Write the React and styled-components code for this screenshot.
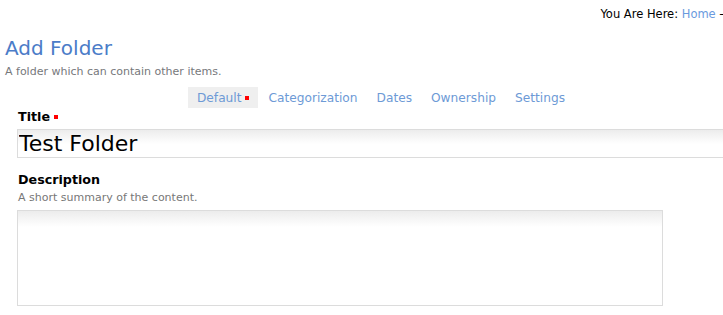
import React from 'react'
import styled, { createGlobalStyle } from 'styled-components'

const GlobalStyle = createGlobalStyle`
  html, body {
    margin: 0;
    padding: 0;
    overflow: hidden;
    background: #fff;
  }
  body {
    font-family: "DejaVu Sans", "Liberation Sans", sans-serif;
    color: #000;
  }
`

const tabs = [
  { label: 'Default', selected: true, required: true },
  { label: 'Categorization' },
  { label: 'Dates' },
  { label: 'Ownership' },
  { label: 'Settings' },
]

const App = () => {
  return (
    <Page>
      <GlobalStyle />
      <Breadcrumbs>
        You Are Here: <Crumb href="#">Home</Crumb> →
      </Breadcrumbs>
      <Heading>Add Folder</Heading>
      <Lead>A folder which can contain other items.</Lead>
      <TabBar>
        {tabs.map(tab => (
          <Tab key={tab.label} selected={tab.selected}>
            {tab.label}
            {tab.required && <Required />}
          </Tab>
        ))}
      </TabBar>
      <Field>
        <Label>Title<Required /></Label>
        <TextInput defaultValue="Test Folder" />
      </Field>
      <Field spaced>
        <Label>Description</Label>
        <Help>A short summary of the content.</Help>
        <TextArea />
      </Field>
    </Page>
  )
}

export default App

const Page = styled.div`
  width: 762px;
  display: flex;
  flex-direction: column;
`

const Breadcrumbs = styled.div`
  padding: 7px 33px 0 0;
  font-size: 11.5px;
  line-height: 14px;
  text-align: right;
  color: #000;
  white-space: nowrap;
`

const Crumb = styled.a`
  color: #6a9ade;
  text-decoration: none;
`

const Heading = styled.h1`
  margin: 15px 0 0;
  padding-left: 5px;
  font-size: 20px;
  line-height: 24px;
  font-weight: normal;
  color: #4b7cc8;
`

const Lead = styled.p`
  margin: 5px 0 0;
  padding-left: 5px;
  font-size: 11px;
  line-height: 14px;
  color: #76787b;
`

const TabBar = styled.nav`
  margin-top: 8px;
  display: flex;
  justify-content: center;
  gap: 1px;
`

const Tab = styled.span`
  display: flex;
  align-items: center;
  padding: 0 9px;
  height: 21px;
  font-size: 12.2px;
  color: #6d9ad6;
  background: ${({ selected }) => (selected ? '#efefef' : 'transparent')};
  cursor: pointer;
`

const Required = styled.span`
  display: inline-block;
  width: 4px;
  height: 4px;
  margin-left: 4px;
  background: #f00;
  vertical-align: middle;
`

const Field = styled.div`
  margin-top: ${({ spaced }) => (spaced ? '14px' : '1px')};
  padding-left: 17px;
  display: flex;
  flex-direction: column;
  align-items: flex-start;
`

const Label = styled.label`
  display: flex;
  align-items: center;
  padding-left: 1px;
  font-size: 12.7px;
  line-height: 16px;
  font-weight: bold;
  color: #000;
`

const Help = styled.div`
  margin-top: 3px;
  padding-left: 1px;
  font-size: 11px;
  line-height: 14px;
  color: #777;
`

const TextInput = styled.input`
  margin-top: 4px;
  box-sizing: border-box;
  width: 745px;
  height: 29px;
  padding: 0 1px;
  border: 1px solid #dcdcdc;
  background: linear-gradient(#ececec, #fff 14px);
  font-family: "DejaVu Sans", sans-serif;
  font-size: 22px;
  color: #000;
  outline: none;
`

const TextArea = styled.textarea`
  margin-top: 5px;
  box-sizing: border-box;
  width: 646px;
  height: 96px;
  border: 1px solid #dcdcdc;
  background: linear-gradient(#ececec, #fff 16px);
  resize: none;
  outline: none;
`
